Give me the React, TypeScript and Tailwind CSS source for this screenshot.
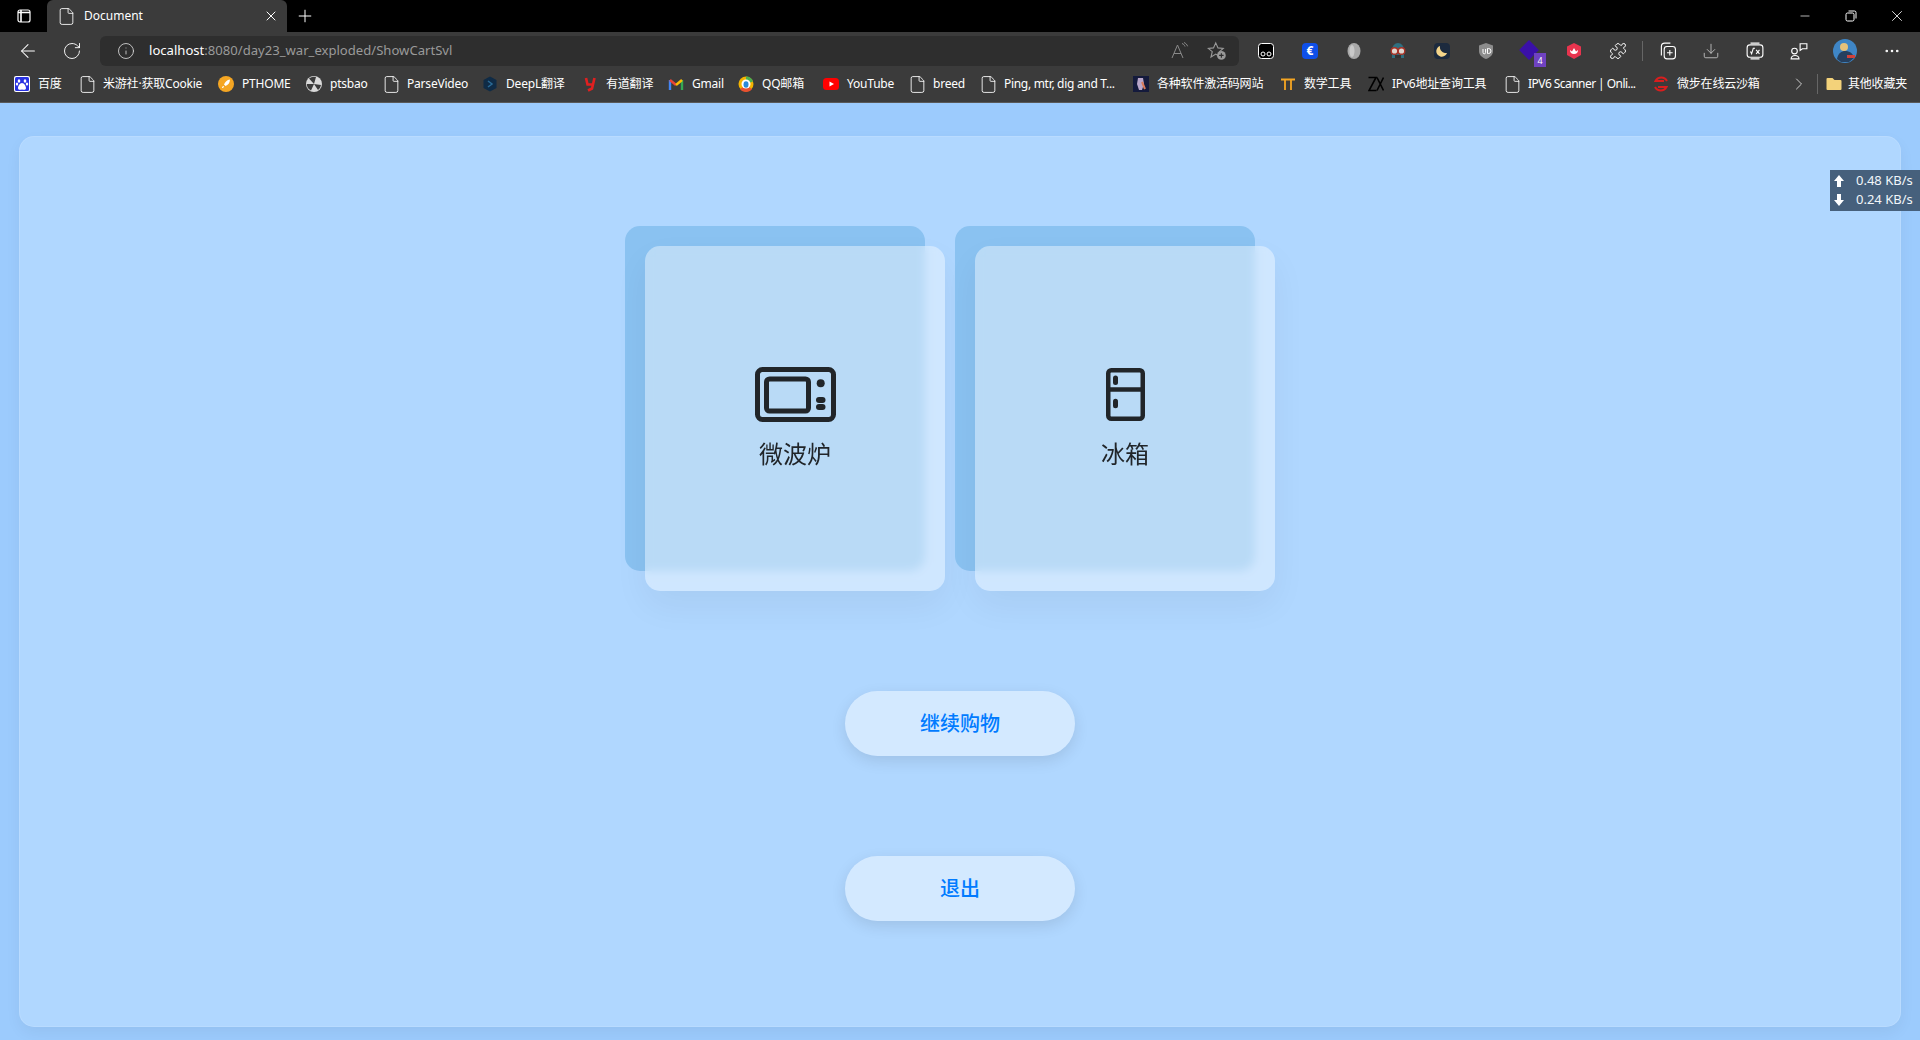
import { ArrowLeft, ChevronRight, File, Info, MoreHorizontal, Plus, RotateCw, X, Minus, Puzzle, Download } from "lucide-react";
import type { ReactNode } from "react";

const cn = "font-['Noto_Sans','Noto_Sans_CJK_SC',sans-serif]";

function Doc() {
  return <File className="w-[19px] h-[19px] -mx-0.5 text-white shrink-0" strokeWidth={1.1} />;
}

const bookmarks: { label: string; icon: ReactNode; cls: string; text?: string }[] = [
  {
    label: "百度",
    cls: "w-[66px]",
    icon: (
      <svg viewBox="0 0 16 16" className="w-4 h-4">
        <rect width="16" height="16" rx="2" fill="#fff" />
        <rect x="1" y="1" width="14" height="14" rx="1.500" fill="#2932e1" />
        <ellipse cx="5" cy="5" rx="1.300" ry="1.800" fill="#fff" />
        <ellipse cx="11" cy="5" rx="1.300" ry="1.800" fill="#fff" />
        <ellipse cx="3" cy="8" rx="1.200" ry="1.500" fill="#fff" />
        <ellipse cx="13" cy="8" rx="1.200" ry="1.500" fill="#fff" />
        <path d="M8 7c-2 0-4 3-4 5s2 2 4 1.500c2 .5 4 .5 4-1.500s-2-5-4-5z" fill="#fff" />
      </svg>
    ),
  },
  { label: "米游社·获取Cookie", cls: "w-[138px]", icon: <Doc /> },
  {
    label: "PTHOME",
    cls: "w-[88px]",
    icon: (
      <svg viewBox="0 0 16 16" className="w-4 h-4">
        <circle cx="8" cy="8" r="8" fill="#f5a623" />
        <path d="M12 3.500c-3 .3-5 2.500-6 5l1.500 1.500c2.500-1 4.500-3 4.500-6.500zM5.500 10c-1 .3-1.500 1-1.500 2 1 0 1.700-.5 2-1.500z" fill="#fff" />
      </svg>
    ),
  },
  {
    label: "ptsbao",
    cls: "w-[78px]",
    icon: (
      <svg viewBox="0 0 16 16" className="w-4 h-4">
        <circle cx="8" cy="8" r="8" fill="#d9d9d9" />
        <path d="M8 8L3 2.500A7.500 7.500 0 0 1 10 1zM8 8l7 1a7.500 7.500 0 0 1-3 5zM8 8l-3 6.500A7.500 7.500 0 0 1 .8 8z" fill="#3a3a3a" />
      </svg>
    ),
  },
  { label: "ParseVideo", cls: "w-[98px]", icon: <Doc /> },
  {
    label: "DeepL翻译",
    cls: "w-[100px]",
    icon: (
      <svg viewBox="0 0 16 16" className="w-4 h-4">
        <path d="M8 0.500 14.500 4v8L8 15.500 1.500 12V4z" fill="#0f2b46" />
        <path d="M6 5l4 3-4 3" stroke="#2a6a96" strokeWidth="1.500" fill="none" />
      </svg>
    ),
  },
  {
    label: "有道翻译",
    cls: "w-[86px]",
    icon: (
      <svg viewBox="0 0 16 16" className="w-4 h-4" fill="none" stroke="#e02020" strokeWidth="2.600">
        <path d="M4 2l1.500 6.500H12M12.500 2L10 12.500 6 14.500" />
      </svg>
    ),
  },
  {
    label: "Gmail",
    cls: "w-[70px]",
    icon: (
      <svg viewBox="0 0 16 16" className="w-4 h-4" fill="none" strokeWidth="2.400">
        <path d="M2 14V4" stroke="#4285f4" />
        <path d="M14 14V4" stroke="#34a853" />
        <path d="M2 4l6 5" stroke="#ea4335" />
        <path d="M14 4L8 9" stroke="#fbbc04" />
      </svg>
    ),
  },
  {
    label: "QQ邮箱",
    cls: "w-[85px]",
    icon: (
      <svg viewBox="0 0 16 16" className="w-4 h-4">
        <circle cx="8" cy="8" r="7.500" fill="#f5b400" />
        <path d="M8 .5a7.500 7.500 0 0 1 7 5L8 8z" fill="#4caf50" />
        <path d="M2 13a7.500 7.500 0 0 0 12 0L8 9z" fill="#e8502f" />
        <circle cx="8" cy="8" r="4.500" fill="#fff" />
        <ellipse cx="8" cy="8.500" rx="2.500" ry="3.200" fill="#2b8ad8" />
      </svg>
    ),
  },
  {
    label: "YouTube",
    cls: "w-[87px]",
    icon: (
      <svg viewBox="0 0 16 16" className="w-4 h-4">
        <rect y="2" width="16" height="12" rx="3.500" fill="#f00" />
        <path d="M6.500 5.500v5L11 8z" fill="#fff" />
      </svg>
    ),
  },
  { label: "breed", cls: "w-[71px]", icon: <Doc /> },
  { label: "Ping, mtr, dig and T...", cls: "w-[152px]", icon: <Doc />, text: "tracking-[-0.3px]" },
  {
    label: "各种软件激活码网站",
    cls: "w-[147px]",
    icon: (
      <svg viewBox="0 0 16 16" className="w-4 h-4">
        <rect width="16" height="16" fill="#141a3c" />
        <path d="M5 2h5l1 6-2 6H6L4 8z" fill="#b9a6c9" />
        <path d="M9 6l3 7" stroke="#d87a5a" strokeWidth="2" />
      </svg>
    ),
  },
  {
    label: "数学工具",
    cls: "w-[88px]",
    icon: (
      <svg viewBox="0 0 16 16" className="w-4 h-4" fill="none" stroke="#f5a623" strokeWidth="1.800">
        <path d="M1 3.500h14M5 3.500V14M11 3.500V14" />
      </svg>
    ),
  },
  {
    label: "IPv6地址查询工具",
    cls: "w-[137px]",
    icon: (
      <svg viewBox="0 0 16 16" className="w-4 h-4" fill="none" stroke="#000" strokeWidth="1.600">
        <path d="M0.500 1.500H8L1 14.500H8.500" />
        <path d="M9 1.500l6.500 13M15.500 1.500L9 14.500" />
      </svg>
    ),
  },
  { label: "IPV6 Scanner | Onli...", cls: "w-[148px]", icon: <Doc />, text: "tracking-[-0.55px]" },
  {
    label: "微步在线云沙箱",
    cls: "w-[109px]",
    icon: (
      <svg viewBox="0 0 16 16" className="w-4 h-4" fill="none" stroke="#d81e1e" strokeWidth="2">
        <path d="M14 5A6.500 6.500 0 0 0 2.500 5H11" />
        <path d="M2 11a6.500 6.500 0 0 0 11.500 0H5" />
      </svg>
    ),
  },
];

function ToolBtn({ children }: { children: ReactNode }) {
  return <button className="w-11 h-7 flex items-center justify-center">{children}</button>;
}

function Extensions() {
  return (
    <div className="flex items-center ml-[5px] h-[30px]">
      <ToolBtn>
        <svg viewBox="0 0 16 16" className="w-4 h-4">
          <rect x="0.500" y="0.500" width="15" height="15" rx="3" fill="#000" stroke="#fff" />
          <circle cx="5" cy="11" r="2" fill="none" stroke="#fff" />
          <circle cx="11" cy="11" r="2" fill="none" stroke="#fff" />
        </svg>
      </ToolBtn>
      <ToolBtn>
        <span className="w-4 h-4 rounded-sm bg-[#0f4fe8] text-white text-[12px] font-bold flex items-center justify-center leading-none">€</span>
      </ToolBtn>
      <ToolBtn>
        <svg viewBox="0 0 16 16" className="w-4 h-[18px]">
          <ellipse cx="8" cy="8" rx="6.500" ry="8" fill="#a9a9a9" />
          <ellipse cx="6" cy="8" rx="2.500" ry="6" fill="#c9c9c9" />
        </svg>
      </ToolBtn>
      <ToolBtn>
        <svg viewBox="0 0 18 18" className="w-[18px] h-[18px]">
          <path d="M3 8a6 7 0 0 1 12 0v8H3z" fill="#2f6f80" />
          <rect x="6" y="13" width="6" height="3" fill="#333" />
          <circle cx="5.500" cy="9" r="3.300" fill="#e0d6d0" stroke="#a93226" strokeWidth="1.400" />
          <circle cx="12.500" cy="9" r="3.300" fill="#e0d6d0" stroke="#a93226" strokeWidth="1.400" />
        </svg>
      </ToolBtn>
      <ToolBtn>
        <svg viewBox="0 0 16 16" className="w-4 h-4">
          <rect width="16" height="16" rx="4" fill="#1c2a3e" />
          <path d="M6 3a5.500 5.500 0 1 0 7 7A6 6 0 0 1 6 3z" fill="#f4d58a" />
        </svg>
      </ToolBtn>
      <ToolBtn>
        <svg viewBox="0 0 16 16" className="w-4 h-4">
          <path d="M8 0l7 2.500V8c0 4-3 6.500-7 8-4-1.500-7-4-7-8V2.500z" fill="#8c8c8c" />
          <path d="M5 6v3.500a1.300 1.300 0 0 0 2.600 0V6M9.500 5.500v5h1a2.500 2.500 0 0 0 0-5z" fill="none" stroke="#fff" strokeWidth="1" />
        </svg>
      </ToolBtn>
      <ToolBtn>
        <div className="relative w-4 h-4">
          <span className="absolute left-0 top-0 w-3.5 h-3.5 bg-[#3a10a8] rotate-45" />
          <span className="absolute -right-2 -bottom-2 w-3 h-3.5 bg-[#6f42c1] text-white text-[9px] flex items-center justify-center leading-none">4</span>
        </div>
      </ToolBtn>
      <ToolBtn>
        <svg viewBox="0 0 16 16" className="w-4 h-[18px]">
          <path d="M8 0l7 3.500v8.500L8 16l-7-4V3.500z" fill="#e8344e" />
          <path d="M4 7a4 4 0 0 0 8 0l-2 1.500L8 5 6 8.500z" fill="#fff" />
        </svg>
      </ToolBtn>
      <ToolBtn><Puzzle className="w-[18px] h-[18px] text-white" strokeWidth={1.3} /></ToolBtn>
      <div className="w-px h-5 bg-[#666] mx-0.5" />
      <ToolBtn>
        <svg viewBox="0 0 16 16" className="w-[18px] h-[18px]" fill="none" stroke="#fff" strokeWidth="1">
          <path d="M3 12V4a3 3 0 0 1 3-3h5" />
          <rect x="5.500" y="4" width="10" height="11" rx="2.500" />
          <path d="M10.500 7v5M8 9.500h5" />
        </svg>
      </ToolBtn>
      <ToolBtn><Download className="w-[18px] h-[18px] text-[#ccc]" strokeWidth={1.1} /></ToolBtn>
      <ToolBtn>
        <svg viewBox="0 0 16 16" className="w-[18px] h-[18px]" fill="none" stroke="#fff" strokeWidth="1">
          <rect x="1" y="2.500" width="14" height="11" rx="2.500" />
          <path d="M4 1h8M4 15h8M4 8.500l1 2 1.500-5H8M9 7l3 3.500M12 7l-3 3.500" />
        </svg>
      </ToolBtn>
      <ToolBtn>
        <svg viewBox="0 0 16 16" className="w-[18px] h-[18px]" fill="none" stroke="#fff" strokeWidth="1">
          <circle cx="4" cy="8" r="2.500" />
          <path d="M1 15a3.500 3 0 0 1 7 0zM9 1.500h6v4.500h-4l-2 1.500z" />
        </svg>
      </ToolBtn>
      <button className="w-11 ml-0.5 flex items-center justify-center">
        <svg viewBox="0 0 24 24" className="w-6 h-6">
          <circle cx="12" cy="12" r="12" fill="#3f86c6" />
          <circle cx="11" cy="8" r="4" fill="#e7c27a" />
          <path d="M4 20c1-6 5-8 8-8s8 1 9 7l-5 4H8z" fill="#26405f" />
          <path d="M14 16h8v3h-8z" fill="#d1413a" />
        </svg>
      </button>
      <button className="w-[49px] flex items-center justify-center">
        <MoreHorizontal className="w-[18px] h-[18px] text-white" strokeWidth={1.5} />
      </button>
    </div>
  );
}

function BrowserChrome() {
  return (
    <div className={`${cn} text-white`}>
      {/* tab strip */}
      <div className="h-8 bg-black flex items-end">
        <div className="w-[47px] h-8 flex items-center justify-center">
          <svg viewBox="0 0 16 16" className="w-4 h-4" fill="none" stroke="#fff" strokeWidth="1.200">
            <rect x="2" y="2" width="12" height="12" rx="2" />
            <path d="M5 2v12M2 4.500h12" strokeWidth="1.600" />
          </svg>
        </div>
        <div className="w-[240px] h-8 bg-[#3b3b3b] rounded-t-md flex items-center pl-3 pr-2 gap-[10px]">
          <Doc />
          <span className="text-xs flex-1">Document</span>
          <X className="w-4 h-4 text-white" strokeWidth={1.5} />
        </div>
        <div className="w-9 h-8 flex items-center justify-center">
          <Plus className="w-5 h-5 text-white" strokeWidth={1.2} />
        </div>
        <div className="ml-auto flex h-8 items-center">
          <div className="w-[46px] flex justify-center"><Minus className="w-3.5 h-3.5" strokeWidth={1.2} /></div>
          <div className="w-[46px] flex justify-center">
            <svg viewBox="0 0 12 12" className="w-3 h-3" fill="none" stroke="#fff" strokeWidth="1">
              <rect x="1" y="3" width="8" height="8" rx="1.500" />
              <path d="M3.500 1H9.500a1.500 1.500 0 0 1 1.500 1.500V8.500" />
            </svg>
          </div>
          <div className="w-[46px] flex justify-center"><X className="w-[18px] h-[18px]" strokeWidth={1.1} /></div>
        </div>
      </div>
      {/* address bar */}
      <div className="h-[34px] bg-[#3b3b3b] flex items-end">
        <div className="w-[100px] h-[30px] flex items-center">
          <div className="w-[55px] flex justify-center"><ArrowLeft className="w-[22px] h-[22px] text-white" strokeWidth={1.1} /></div>
          <div className="w-[33px] flex justify-center"><RotateCw className="w-5 h-5 text-white" strokeWidth={1.1} /></div>
        </div>
        <div className="w-[1139px] h-[30px] bg-[#2e2e2e] rounded-md flex items-center pl-[17px] pr-3">
          <Info className="w-[18px] h-[18px] text-[#ddd]" strokeWidth={1.1} />
          <span className="ml-[14px] text-[13.1px] flex-1">
            localhost<span className="text-[#9a9a9a]">:8080/day23_war_exploded/ShowCartSvl</span>
          </span>
          <svg viewBox="0 0 18 18" className="w-[18px] h-[18px] mr-[18px]" fill="none" stroke="#8a8a8a" strokeWidth="1">
            <path d="M1 16 6.500 3 12 16M3 11.500h7" />
            <path d="M11 1.500c1.500.5 2.500 1.500 3 3M13 0.500c1.800.8 3 2 3.600 3.800" />
          </svg>
          <svg viewBox="0 0 16 16" className="w-5 h-5" fill="none" stroke="#999" strokeWidth="0.900">
            <path d="M7 1.500l1.800 4 4.200.4-3.200 2.800 1 4.300L7 10.500 3.200 12.800l1-4.300L1 5.900l4.200-.4z" />
            <circle cx="11.500" cy="11.500" r="3.500" fill="#999" stroke="none" />
            <path d="M11.500 9.700v3.600M9.700 11.500h3.600" stroke="#2e2e2e" />
          </svg>
        </div>
        <Extensions />
      </div>
      {/* bookmarks */}
      <div className="h-[37px] bg-[#3b3b3b] border-b border-[#595959] flex items-center pl-[14px]">
        {bookmarks.map((b) => (
          <div key={b.label} className={`flex items-center gap-2 shrink-0 ${b.cls}`}>
            {b.icon}
            <span className={`text-xs whitespace-nowrap ${b.text ?? "tracking-[-0.2px]"}`}>{b.label}</span>
          </div>
        ))}
        <ChevronRight className="w-5 h-5 ml-[27px] text-[#ccc]" strokeWidth={1.2} />
        <div className="w-px h-5 bg-[#666] ml-[8px]" />
        <div className="flex items-center gap-1.5 ml-[8px]">
          <svg viewBox="0 0 16 16" className="w-4 h-4">
            <path d="M0.500 3a1 1 0 0 1 1-1h5l2 2h6a1 1 0 0 1 1 1v8a1 1 0 0 1-1 1h-13a1 1 0 0 1-1-1z" fill="#f3d27a" />
          </svg>
          <span className="text-xs whitespace-nowrap tracking-[-0.2px]">其他收藏夹</span>
        </div>
      </div>
    </div>
  );
}

function MicrowaveIcon() {
  return (
    <svg viewBox="0 0 81 55" className="w-[81px] h-[55px]" fill="none" stroke="#212529" strokeWidth="5">
      <rect x="2.500" y="2.500" width="76" height="50" rx="5" />
      <rect x="11.500" y="12" width="42" height="32" rx="3" />
      <circle cx="65.700" cy="16.300" r="4" fill="#212529" stroke="none" />
      <rect x="61" y="30" width="9.500" height="6" rx="3" fill="#212529" stroke="none" />
      <rect x="61" y="37" width="9.500" height="6" rx="3" fill="#212529" stroke="none" />
    </svg>
  );
}

function FridgeIcon() {
  return (
    <svg viewBox="0 0 39 53" className="w-[39px] h-[53px]" fill="none" stroke="#212529" strokeWidth="4.500">
      <rect x="2.250" y="2.250" width="34.500" height="48.500" rx="3" />
      <path d="M2 21.500h35" />
      <rect x="7" y="7.500" width="5" height="9.500" rx="2.500" fill="#212529" stroke="none" />
      <rect x="7" y="30.700" width="5" height="9.500" rx="2.500" fill="#212529" stroke="none" />
    </svg>
  );
}

function GlassCard({ label, icon }: { label: string; icon: ReactNode }) {
  return (
    <div className="relative w-[300px] h-[345px]">
      <div className="absolute -left-5 -top-5 w-[300px] h-[345px] rounded-[15px] bg-[#8ac2f1]" />
      <div className="relative h-full rounded-[15px] bg-white/40 backdrop-blur-[5px] shadow-[0_15px_35px_rgba(0,0,0,0.05)] flex flex-col items-center pt-[121px]">
        <div className="h-[55px] flex items-center">{icon}</div>
        <p className="mt-[14px] text-2xl leading-[36px] text-[#212529]">{label}</p>
      </div>
    </div>
  );
}

function PillButton({ label }: { label: string }) {
  return (
    <button className="w-[230px] h-[65px] rounded-full bg-white/45 shadow-[0_5px_15px_rgba(0,0,0,0.1)] text-[20px] font-medium text-[#007bff]">
      {label}
    </button>
  );
}

function Arrow({ down }: { down?: boolean }) {
  return (
    <svg viewBox="0 0 10 12" className={`w-[10px] h-3 ${down ? "rotate-180" : ""}`} fill="#fff">
      <path d="M5 0l5 6H7v6H3V6H0z" />
    </svg>
  );
}

export default function App() {
  return (
    <div className={`${cn} relative w-full h-[1040px] overflow-hidden bg-[#9ccbfd] flex flex-col`}>
      <BrowserChrome />
      <div className="flex-1 pt-[33px] pb-[13px] px-[19px]">
        <div className="h-full rounded-[15px] bg-[#b0d7ff] shadow-[inset_0_0_0_1px_rgba(255,255,255,0.12),0_6px_15px_rgba(0,0,0,0.05)] flex flex-col items-center pt-[110px]">
          <div className="flex gap-[30px]">
            <GlassCard label="微波炉" icon={<MicrowaveIcon />} />
            <GlassCard label="冰箱" icon={<FridgeIcon />} />
          </div>
          <div className="mt-[100px] flex flex-col gap-[100px]">
            <PillButton label="继续购物" />
            <PillButton label="退出" />
          </div>
        </div>
      </div>
      {/* network speed overlay */}
      <div className="absolute right-0 top-[170px] w-[90px] h-[41px] bg-[#46607c] text-[#f2f6fa] text-[13px] leading-[19px] py-[1px] pl-[4px]">
        <div className="flex items-center">
          <span className="w-[22px] flex"><Arrow /></span>
          <span className="whitespace-nowrap">0.48 KB/s</span>
        </div>
        <div className="flex items-center">
          <span className="w-[22px] flex"><Arrow down /></span>
          <span className="whitespace-nowrap">0.24 KB/s</span>
        </div>
      </div>
    </div>
  );
}
